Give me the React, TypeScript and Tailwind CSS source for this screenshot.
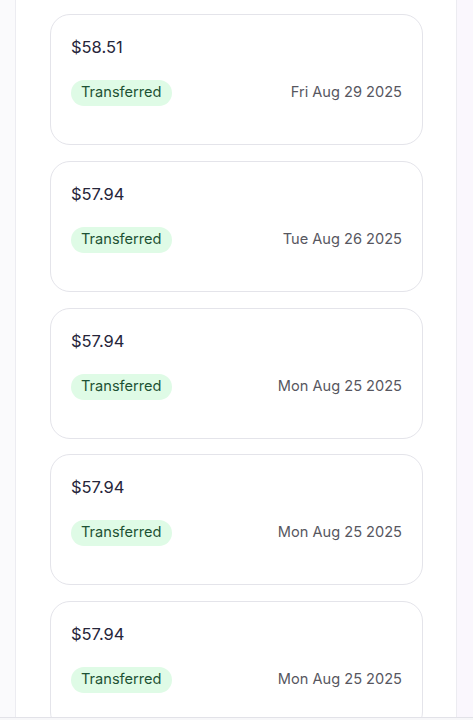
import React from 'react';

const payouts = [
  { amount: '$58.51', status: 'Transferred', date: 'Fri Aug 29 2025' },
  { amount: '$57.94', status: 'Transferred', date: 'Tue Aug 26 2025' },
  { amount: '$57.94', status: 'Transferred', date: 'Mon Aug 25 2025' },
  { amount: '$57.94', status: 'Transferred', date: 'Mon Aug 25 2025' },
  { amount: '$57.94', status: 'Transferred', date: 'Mon Aug 25 2025' },
];

export default function App() {
  return (
    <div
      className="h-[720px] overflow-hidden flex bg-[#fbfafd]"
      style={{ fontFamily: 'Inter, "Noto Sans", sans-serif' }}
    >
      {/* left gutter */}
      <div className="w-[15px] flex-shrink-0 bg-[#fafafc]" />

      {/* main column */}
      <div className="w-[442px] flex-shrink-0 bg-white border-x border-[#ececf1] pt-[14px] pl-[34px] pr-[33px] flex flex-col gap-[15.75px]">
        {payouts.map((p, i) => (
          <div
            key={i}
            className="flex-shrink-0 rounded-[20px] border border-[#e4e4ea] bg-white pt-5 pl-5 pr-5 pb-[38px]"
          >
            <div className="text-[16.5px] leading-6 text-[#26263a]">{p.amount}</div>
            <div className="mt-[21px] flex items-center justify-between">
              <span className="h-[26px] px-[10px] flex items-center rounded-full bg-[#dffbe6] text-[14.6px] text-[#1d5234]">
                {p.status}
              </span>
              <span className="text-[14.6px] text-[#57575f]">{p.date}</span>
            </div>
          </div>
        ))}
      </div>

      {/* right gutter */}
      <div className="flex-1 bg-[#faf7fd]" />

      {/* bottom bar edge */}
      <div className="fixed left-0 right-0 bottom-0 h-[3px] border-t border-[#e2e2e8] bg-[#f7f7f9]" />
    </div>
  );
}
